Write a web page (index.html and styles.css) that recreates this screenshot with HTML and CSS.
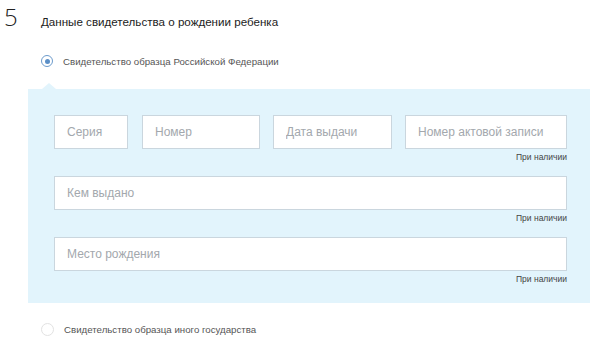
FILE: index.html
```html
<!DOCTYPE html>
<html lang="ru">
<head>
  <meta charset="UTF-8" />
  <title>Данные свидетельства о рождении ребенка</title>
  <link rel="stylesheet" href="styles.css">
</head>
<body>
  <div class="step">
    <div class="step-head">
      <span class="step-num">5</span>
      <h2>Данные свидетельства о рождении ребенка</h2>
    </div>

    <label class="radio checked">
      <span class="dot"></span>
      Свидетельство образца Российской Федерации
    </label>

    <div class="panel">
      <div class="row">
        <div class="field f-series"><input type="text" placeholder="Серия" /></div>
        <div class="field f-number"><input type="text" placeholder="Номер" /></div>
        <div class="field f-date"><input type="text" placeholder="Дата выдачи" /></div>
        <div class="field f-act">
          <input type="text" placeholder="Номер актовой записи" />
          <div class="hint">При наличии</div>
        </div>
      </div>

      <div class="row">
        <div class="field full">
          <input type="text" placeholder="Кем выдано" />
          <div class="hint">При наличии</div>
        </div>
      </div>

      <div class="row">
        <div class="field full">
          <input type="text" placeholder="Место рождения" />
          <div class="hint">При наличии</div>
        </div>
      </div>
    </div>

    <label class="radio other">
      <span class="dot"></span>
      Свидетельство образца иного государства
    </label>
  </div>
</body>
</html>
```

FILE: styles.css
```css
body {
  margin: 0;
  font-family: 'Liberation Sans', Arial, sans-serif;
  background-color: #fff;
  color: #333;
}
.step {
  width: 600px;
  height: 340px;
  overflow: hidden;
}
.step-head {
  display: flex;
  align-items: baseline;
  height: 40px;
  padding-top: 1px;
  box-sizing: border-box;
}
.step-num {
  width: 37px;
  padding-left: 4px;
  font-family: 'Open Sans', 'Liberation Sans', sans-serif;
  font-weight: 300;
  font-size: 24px;
  line-height: 32px;
  color: #222;
}
h2 {
  margin: 0;
  font-size: 11.6px;
  font-weight: normal;
  color: #222;
}
.radio {
  display: flex;
  align-items: center;
  gap: 10px;
  padding-left: 41px;
  font-size: 9.7px;
  color: #555;
  height: 22px;
}
.radio.checked {
  margin-top: 10px;
}
.dot {
  width: 10px;
  height: 10px;
  border: 1.5px solid #6c9bcc;
  border-radius: 50%;
  position: relative;
}
.radio.checked .dot::after {
  content: '';
  position: absolute;
  top: 2.5px;
  left: 2.5px;
  width: 5px;
  height: 5px;
  border-radius: 50%;
  background-color: #5b8fc7;
}
.radio.other {
  margin-top: 15px;
}
.radio.other .dot {
  border: 1px solid #e2e2e2;
  width: 11px;
  height: 11px;
}
.panel {
  position: relative;
  margin: 17px 10px 0 28px;
  padding: 26px 23px 18px 26px;
  background-color: #e2f4fc;
  display: flex;
  flex-direction: column;
  gap: 13px;
}
.panel::before {
  content: '';
  position: absolute;
  top: -6px;
  left: 14px;
  border-left: 7px solid transparent;
  border-right: 7px solid transparent;
  border-bottom: 6px solid #e2f4fc;
}
.row {
  display: flex;
  gap: 13px;
  align-items: flex-start;
}
.field input {
  display: block;
  box-sizing: border-box;
  width: 100%;
  height: 34px;
  padding: 0 12px;
  border: 1px solid #cad6de;
  background-color: #fff;
  font-family: 'Liberation Sans', Arial, sans-serif;
  font-size: 12px;
}
.field input::placeholder {
  color: #a3a8ad;
}
.f-series { width: 74px; margin-right: 1px; }
.f-number { width: 118px; }
.f-date { width: 119px; }
.f-act { width: 162px; }
.full { flex: 1; }
.hint {
  margin-top: 3px;
  text-align: right;
  font-size: 8.5px;
  line-height: 11px;
  color: #444;
}
```
